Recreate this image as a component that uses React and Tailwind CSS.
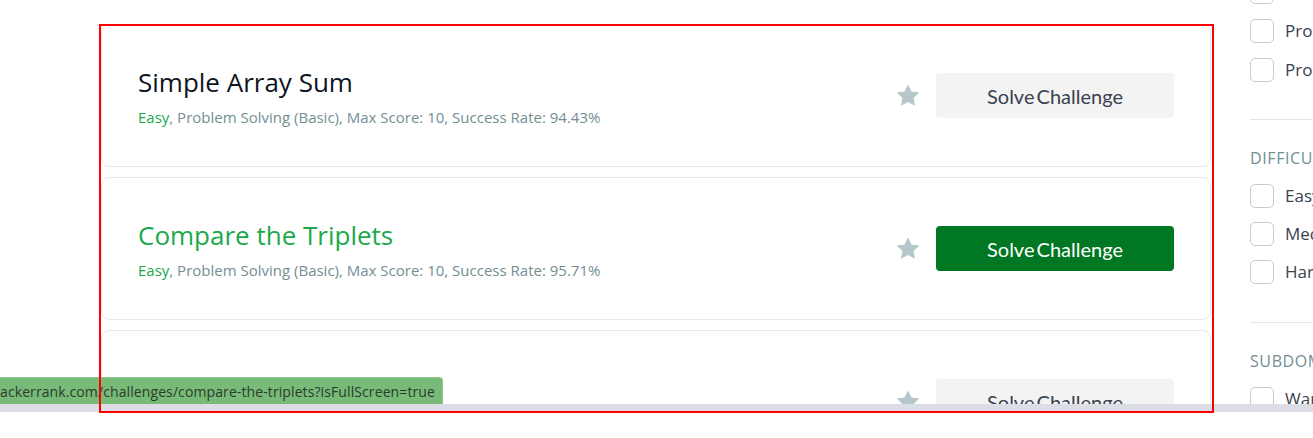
import React from "react";

const Star = () => (
  <svg width="22" height="21" viewBox="0 0 24 23" className="shrink-0">
    <path
      d="M12 0.8l3.3 7 7.6 0.9-5.6 5.2 1.5 7.6L12 17.7l-6.8 3.8 1.5-7.6L1.1 8.7l7.6-0.9z"
      fill="#b6c7cc"
      stroke="#b6c7cc"
      strokeWidth="1.4"
      strokeLinejoin="round"
    />
  </svg>
);

function Card({ title, rate, green, active }) {
  return (
    <div className="h-[143px] shrink-0 rounded-[8px] border border-[#e6e8ea] bg-white flex items-center justify-between pl-[36px] pr-[36px]">
      <div className="flex flex-col mt-[2px]" style={{ fontFamily: "'Open Sans', sans-serif" }}>
        <div className={`text-[26px] leading-[32px] ${green ? "text-[#1ba94c]" : "text-[#0e141e]"}`}>
          {title}
        </div>
        <div className="text-[15px] leading-[20px] mt-[9px] text-[#738f93]">
          <span className="text-[#1ba94c]">Easy</span>, Problem Solving (Basic), Max Score: 10, Success Rate: {rate}
        </div>
      </div>
      <div className="flex items-center gap-[17px]">
        <Star />
        <button
          className={`w-[238px] h-[45px] rounded-[4px] text-[20px] leading-[24px] ${active ? "bg-[#007722] text-white" : "bg-[#f3f3f3] text-[#39424e]"}`}
          style={{ fontFamily: "Lato, sans-serif", wordSpacing: "-3px" }}
        >
          Solve Challenge
        </button>
      </div>
    </div>
  );
}

function Check({ label }) {
  return (
    <div className="flex items-center gap-[11px] h-[24px] shrink-0">
      <div className="w-[24px] h-[24px] rounded-[5px] border border-[#c5cbd3] bg-white shrink-0" />
      <span className="text-[17px] text-[#39424e] whitespace-nowrap" style={{ fontFamily: "'Open Sans', sans-serif" }}>
        {label}
      </span>
    </div>
  );
}

export default function App() {
  return (
    <div className="relative w-[1313px] h-[438px] overflow-hidden bg-white">
      <div className="h-[404px] overflow-hidden flex">
        <div className="w-[101px] shrink-0" />
        <div className="w-[1110px] shrink-0 flex flex-col gap-[10px] pt-[24px]">
          <Card title="Simple Array Sum" rate="94.43%" />
          <Card title="Compare the Triplets" rate="95.71%" green active />
          <Card title="A Very Big Sum" rate="98.82%" />
        </div>
        <div className="w-[39px] shrink-0" />
        <div className="flex-1 flex flex-col mt-[-20px]" style={{ fontFamily: "'Open Sans', sans-serif" }}>
          <div className="flex flex-col gap-[15px] shrink-0">
            <Check label="Problem Solving (Basic)" />
            <Check label="Problem Solving (Intermediate)" />
            <Check label="Problem Solving (Advanced)" />
          </div>
          <div className="h-px shrink-0 bg-[#e1e6e8] mt-[37px]" />
          <div className="mt-[28px] shrink-0 text-[16px] leading-[20px] tracking-[0.6px] text-[#738f93]">DIFFICULTY</div>
          <div className="flex flex-col gap-[14px] mt-[16px] shrink-0">
            <Check label="Easy" />
            <Check label="Medium" />
            <Check label="Hard" />
          </div>
          <div className="h-px shrink-0 bg-[#e1e6e8] mt-[38px]" />
          <div className="mt-[28px] shrink-0 text-[16px] leading-[20px] tracking-[0.6px] text-[#738f93]">SUBDOMAINS</div>
          <div className="flex flex-col gap-[14px] mt-[16px] shrink-0">
            <Check label="Warmup" />
          </div>
        </div>
      </div>
      <div className="h-[8px] bg-[#dcdde5]" />

      <div
        className="absolute left-0 top-[377px] h-[27px] w-[443px] bg-[#78ba78] rounded-tr-[4px] border-t border-r border-[#8cc78c] flex items-center text-[14px] tracking-[0.1px] text-[#2c3a2c] whitespace-nowrap overflow-hidden"
        style={{ fontFamily: "'Open Sans', sans-serif" }}
      >
        ackerrank.com/challenges/compare-the-triplets?isFullScreen=true
      </div>

      <div className="absolute left-[99px] top-[24px] w-[1115px] h-[389px] border-2 border-[#ff0000] pointer-events-none" />
    </div>
  );
}
